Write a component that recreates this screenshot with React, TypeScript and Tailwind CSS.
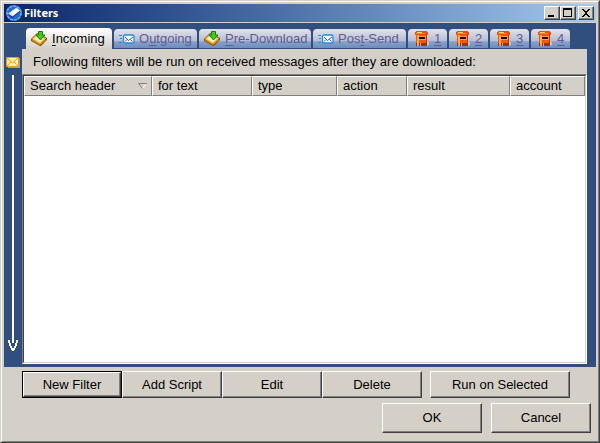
import type { ReactNode } from "react";

const raised =
  "border border-t-white border-l-white border-r-[#404040] border-b-[#404040] shadow-[inset_-1px_-1px_0_#808080]";

function AppIcon() {
  return (
    <svg width="16" height="16" viewBox="0 0 16 16" aria-hidden="true">
      <circle cx="8" cy="8" r="8" fill="#2468c8" />
      <circle cx="8" cy="8" r="7" fill="none" stroke="#6aacf4" strokeWidth="1.500" strokeDasharray="3 1" />
      <path d="M2 9.500 6 13.500l8-7V4.500L6 11z" fill="#103c88" />
      <path d="M2 8.500 10.500 2.500l3.500 3L6.500 11.500z" fill="#d8dcea" />
      <path d="M5 7.500 10.500 3.500l3 2L7 10.500z" fill="#fff" />
    </svg>
  );
}

function InboxIcon() {
  return (
    <svg width="17" height="15" viewBox="0 0 17 15" aria-hidden="true">
      <path d="M0 8 6 2l10 5v2l-6 6H9L0 10z" fill="#8a5200" />
      <path d="M1 8 6 3l9 4.500L9 13z" fill="#f8c860" />
      <path d="M3 8 7 4.500l6 3L9 11z" fill="#fff0b8" />
      <path d="M1 9l8 4.500L15 9" fill="none" stroke="#d89820" />
      <path d="M7.500.500h4V4H14L9.500 9 5 4h2.500z" fill="#48c818" stroke="#08801c" />
    </svg>
  );
}

function SendIcon() {
  return (
    <svg width="16" height="10" viewBox="0 0 16 10" aria-hidden="true">
      <path d="M0 1.500h3M1 4.500h2M0 8.500h3" stroke="#2490d8" />
      <rect x="4.500" y="1" width="10.500" height="8" rx="1.500" fill="#f2f8ff" stroke="#2490d8" strokeWidth="1.300" />
      <path d="M6 3l3.500 3.500L14 3M6 7.500l2-2M13.500 7.500l-2-2" fill="none" stroke="#5a52c0" />
    </svg>
  );
}

function PostboxIcon() {
  return (
    <svg width="15" height="15" viewBox="0 0 15 15" shapeRendering="crispEdges" aria-hidden="true">
      <path d="M11 10h2v1h1v3h-1v1h-2z" fill="#c8c4c0" />
      <path d="M1 0h11v1h1v3H0V1h1z" fill="#f04c10" />
      <path d="M2 1h5v1H2z" fill="#ffd870" />
      <path d="M1 2h9v1H1z" fill="#ff8828" />
      <path d="M1 4h11v8H1z" fill="#f45810" />
      <path d="M2 4h2v8H2z" fill="#ffb040" />
      <path d="M11 4h1v8h-1z" fill="#c83000" />
      <path d="M4 5h7v4H4z" fill="#ff9838" />
      <path d="M4 6h6v2H4z" fill="#180800" />
      <path d="M1 12h11v3H1z" fill="#8c3820" />
      <path d="M2 12h2v3H2zM5 12h1v3H5z" fill="#e0a080" />
    </svg>
  );
}

function EnvelopeIcon() {
  return (
    <svg width="14" height="11" viewBox="0 0 14 11" aria-hidden="true">
      <path d="M2 1h12v10H2z" fill="#a8a090" />
      <path d="M.500.500h12v9H.500z" fill="#fff0b0" stroke="#e8a410" />
      <path d="M1 1l5.500 5L12 1M1 9l4-4M12 9L8 5" fill="none" stroke="#e8a410" />
    </svg>
  );
}

type TabItem = { before: string; key: string; after: string; icon: ReactNode; size: string };

const wideTab = "gap-1 pl-[5px]";
const numberTab = "h-5 w-[39px] gap-1 pl-[7px]";

const tabs: TabItem[] = [
  { before: "", key: "I", after: "ncoming", icon: <InboxIcon />, size: `h-[21px] w-[86px] ${wideTab}` },
  { before: "O", key: "u", after: "tgoing", icon: <SendIcon />, size: `h-5 w-[83px] ${wideTab}` },
  { before: "", key: "P", after: "re-Download", icon: <InboxIcon />, size: `h-5 w-[112px] ${wideTab}` },
  { before: "Pos", key: "t", after: "-Send", icon: <SendIcon />, size: `h-5 w-[93px] ${wideTab}` },
  { before: "", key: "1", after: "", icon: <PostboxIcon />, size: numberTab },
  { before: "", key: "2", after: "", icon: <PostboxIcon />, size: numberTab },
  { before: "", key: "3", after: "", icon: <PostboxIcon />, size: numberTab },
  { before: "", key: "4", after: "", icon: <PostboxIcon />, size: numberTab },
];

function Tab({ tab, active }: { tab: TabItem; active: boolean }) {
  return (
    <button
      type="button"
      role="tab"
      aria-selected={active}
      className={`flex shrink-0 items-center rounded-t-[4px] whitespace-nowrap ${tab.size} ${
        active
          ? "bg-linear-to-b from-white to-[#d4d0c8] text-black"
          : "border-b border-[#304e7e] bg-[linear-gradient(#e2e2ea,#b4bcd2_65%,#88a2cc_66%,#6c8cbe)] text-[#635a92]"
      }`}
    >
      {tab.icon}
      <span>
        {tab.before}
        <span className="underline underline-offset-2">{tab.key}</span>
        {tab.after}
      </span>
    </button>
  );
}

const columns = [
  { name: "Search header", width: "w-32", sorted: true },
  { name: "for text", width: "w-[100px]" },
  { name: "type", width: "w-[85px]" },
  { name: "action", width: "w-[70px]" },
  { name: "result", width: "w-[103px]" },
  { name: "account", width: "" },
];

function PushButton({ children, size, isDefault }: { children: ReactNode; size: string; isDefault?: boolean }) {
  return isDefault ? (
    <button type="button" className={`border border-black bg-[#d4d0c8] ${size}`}>
      <span className={`flex h-full items-center justify-center ${raised}`}>{children}</span>
    </button>
  ) : (
    <button type="button" className={`bg-[#d4d0c8] ${raised} ${size}`}>
      {children}
    </button>
  );
}

function CaptionButton({ label, children }: { label: string; children: ReactNode }) {
  return (
    <button type="button" aria-label={label} className={`flex h-[14px] w-4 items-center justify-center bg-[#d4d0c8] ${raised}`}>
      <svg width="10" height="10" viewBox="0 0 10 10" shapeRendering="crispEdges" aria-hidden="true">
        {children}
      </svg>
    </button>
  );
}

export default function App() {
  return (
    <div className="flex h-screen flex-col border border-t-[#d4d0c8] border-r-[#404040] border-b-[#404040] border-l-[#d4d0c8] bg-[#d4d0c8] font-['Liberation_Sans',Arial,sans-serif] text-[13px] leading-4 text-black">
      <div className="flex min-h-0 flex-1 flex-col border border-t-white border-r-[#808080] border-b-[#808080] border-l-white p-[2px]">
        <header className="flex h-[18px] shrink-0 items-center bg-linear-to-r from-[#0a246a] to-[#a6caf0] px-[2px]">
          <AppIcon />
          <h1 className="ml-[2px] flex-1 font-['Noto_Sans',sans-serif] text-[11px] font-bold text-white">Filters</h1>
          <CaptionButton label="Minimize">
            <path d="M1 7h6v2H1z" />
          </CaptionButton>
          <CaptionButton label="Maximize">
            <path d="M0 0h9v9H0zM1 2v6h7V2z" fillRule="evenodd" />
          </CaptionButton>
          <div className="ml-[2px] flex">
            <CaptionButton label="Close">
              <path d="M1 1h2v1h1v1h2V2h1V1h2v1H8v1H7v1H6v2h1v1h1v1h1v1H7V8H6V7H4v1H3v1H1V8h1V7h1V6h1V4H3V3H2V2H1z" />
            </CaptionButton>
          </div>
        </header>

        <div className="mt-px flex min-h-0 flex-1 bg-[#304e7e] pt-[5px] pr-[9px] pb-[3px]">
          <div className="flex w-[18px] shrink-0 flex-col items-center pt-[29px] pb-3">
            <EnvelopeIcon />
            <div className="mt-[7px] min-h-0 w-[2px] flex-1 bg-white" />
            <svg className="shrink-0" width="12" height="13" viewBox="0 0 12 13" shapeRendering="crispEdges" aria-hidden="true">
              <path
                d="M5 0h2v4H5zM1 1h2v3h1v3h1v2h2V7h1V4h1V1h2v3h-1v3H9v2H8v2H7v1H5v-1H4V9H3V7H2V4H1z"
                fill="#fff"
              />
            </svg>
          </div>

          <main className="flex min-w-0 flex-1 flex-col">
            <div role="tablist" className="flex shrink-0 items-end gap-[2px] pl-1">
              {tabs.map((tab, i) => (
                <Tab key={tab.before + tab.key} tab={tab} active={i === 0} />
              ))}
            </div>
            <p className="flex h-[25px] shrink-0 items-center truncate bg-[#d4d0c8] pl-[11px]">
              Following filters will be run on received messages after they are downloaded:
            </p>
            <div className="min-h-0 flex-1 border border-t-[#808080] border-r-white border-b-white border-l-[#808080]">
              <div className="h-full border border-t-[#404040] border-r-[#d4d0c8] border-b-[#d4d0c8] border-l-[#404040] bg-white">
                <table className="w-full table-fixed border-separate border-spacing-0">
                  <thead>
                    <tr className="h-5">
                      {columns.map((c) => (
                        <th
                          key={c.name}
                          scope="col"
                          className={`border border-t-white border-r-[#808080] border-b-[#808080] border-l-white bg-[#d4d0c8] p-0 pr-1 pl-[5px] text-left font-normal ${c.width}`}
                        >
                          <span className="flex items-center justify-between">
                            {c.name}
                            {c.sorted && (
                              <svg width="9" height="6" viewBox="0 0 9 6" aria-hidden="true">
                                <path d="M8.500.500 4.500 5.500" fill="none" stroke="#fff" />
                                <path d="M9 .500H.500L4.500 5.500" fill="none" stroke="#808080" />
                              </svg>
                            )}
                          </span>
                        </th>
                      ))}
                    </tr>
                  </thead>
                </table>
              </div>
            </div>
          </main>
        </div>

        <div className="flex shrink-0 pt-1 pl-[18px]">
          <PushButton size="h-[27px] w-[100px]" isDefault>
            New Filter
          </PushButton>
          <PushButton size="h-[27px] w-[100px]">Add Script</PushButton>
          <PushButton size="h-[27px] w-[100px]">Edit</PushButton>
          <PushButton size="h-[27px] w-[100px]">Delete</PushButton>
          <div className="ml-2 flex">
            <PushButton size="h-[27px] w-[140px]">Run on Selected</PushButton>
          </div>
        </div>
        <div className="flex shrink-0 justify-end gap-[9px] pt-[5px] pr-[5px] pb-[6px]">
          <PushButton size="h-[30px] w-[100px]">OK</PushButton>
          <PushButton size="h-[30px] w-[100px]">Cancel</PushButton>
        </div>
      </div>
    </div>
  );
}
